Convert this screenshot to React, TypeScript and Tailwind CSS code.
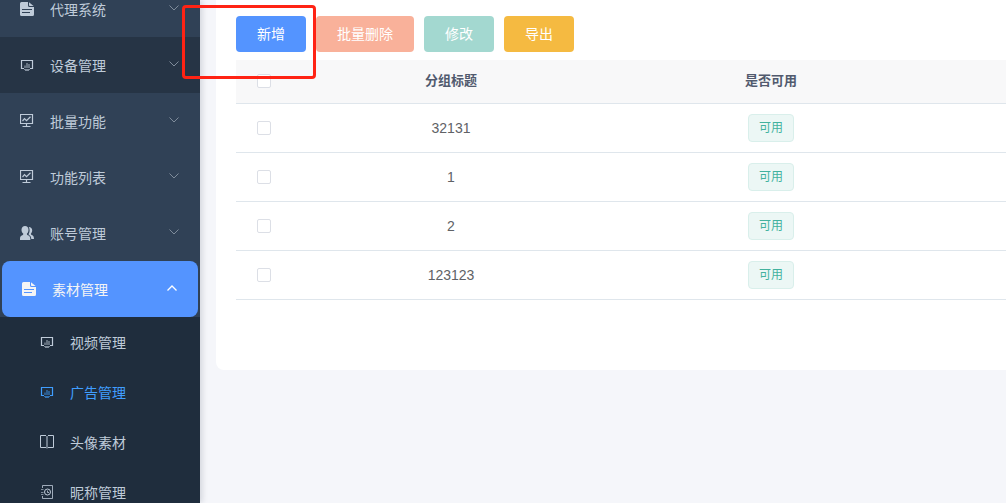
import { useState } from "react";

type IconName = "document" | "monitor" | "board" | "users" | "book" | "contacts";

type MenuItem = {
  label: string;
  icon: IconName;
  hovered?: boolean;
};

type Row = {
  id: number;
  title: string;
  status: string;
};

const menuItems: MenuItem[] = [
  { label: "代理系统", icon: "document" },
  { label: "设备管理", icon: "monitor", hovered: true },
  { label: "批量功能", icon: "board" },
  { label: "功能列表", icon: "board" },
  { label: "账号管理", icon: "users" },
];

const subItems: MenuItem[] = [
  { label: "视频管理", icon: "monitor" },
  { label: "广告管理", icon: "monitor" },
  { label: "头像素材", icon: "book" },
  { label: "昵称管理", icon: "contacts" },
];

const rows: Row[] = [
  { id: 1, title: "32131", status: "可用" },
  { id: 2, title: "1", status: "可用" },
  { id: 3, title: "2", status: "可用" },
  { id: 4, title: "123123", status: "可用" },
];

const actions = [
  { label: "新增", color: "bg-[#5494ff]" },
  { label: "批量删除", color: "bg-[#f9b19a]" },
  { label: "修改", color: "bg-[#a3d8d0]" },
  { label: "导出", color: "bg-[#f5ba41]" },
];

function Icon({ name }: { name: IconName }) {
  return (
    <svg viewBox="0 0 14 14" className="mr-4 h-3.5 w-3.5 shrink-0" fill="none" stroke="currentColor" aria-hidden="true">
      {name === "document" && (
        <path
          stroke="none"
          fill="currentColor"
          fillRule="evenodd"
          d="M1.5 0H8v3.5A1.5 1.5 0 0 0 9.5 5H14v7.5a1.5 1.5 0 0 1-1.5 1.5h-11A1.5 1.5 0 0 1 0 12.5v-11A1.5 1.5 0 0 1 1.5 0ZM9 0.2L13.6 4H9.8A.8.8 0 0 1 9 3.2ZM2 7v1h10V7ZM2 10v1h8v-1Z"
        />
      )}
      {name === "monitor" && (
        <>
          <path d="M4 10.5H1.5v-8h11v8H10" strokeWidth="1.2" />
          <path d="M5 7.5V10M7 5v5M9 6v4" strokeOpacity="0.6" strokeWidth="1.4" />
          <path d="M4 11.5h6M5 12.5h4" strokeOpacity="0.6" />
        </>
      )}
      {name === "board" && (
        <>
          <path d="M.5.5h12v9H.5Z" strokeWidth="1.2" />
          <path d="M2.5 7l2-2.3 2 2 4-3.9" strokeWidth="1.2" />
          <path d="M6.5 10v3M2.5 12.5h8" strokeWidth="1.2" />
        </>
      )}
      {name === "users" && (
        <g stroke="none" fill="currentColor">
          <path d="M5 0C7.2 0 8.5 1.5 8.5 3.8 8.5 5.6 7.8 7 6.9 7.8c0 .8.2 1 1 1.4C9.7 10 10.3 10.7 10.4 14H0c0-3.3.4-3.9 2.3-4.8.8-.4 1-.6 1-1.4C2.3 7 1.5 5.6 1.5 3.8 1.5 1.5 3 0 5 0Z" />
          <path d="M8.7 1c2.2 0 3.5 1.3 3.5 3.3 0 1.5-.6 2.7-1.3 3.4 0 .8.2 1 .9 1.3 1.5.8 2.2 1.4 2.2 4h-2.7c-.2-2.4-1-3.4-2.600-4.300V7.800C9.900 5.800 9.900 3 8.700 1Z" />
        </g>
      )}
      {name === "book" && (
        <>
          <path d="M6 .5H.5v12H6M8 .5h5.500v12H8" />
          <path d="M7 1v12.500" strokeOpacity="0.5" strokeWidth="2" />
        </>
      )}
      {name === "contacts" && (
        <>
          <path d="M2.5 3V.5h10v13h-10V11" strokeOpacity="0.8" />
          <path d="M1 4.5h2.500M1 7.500h2.500M1 9.500h2.500" strokeOpacity="0.6" />
          <circle cx="7.5" cy="7" r="3" />
          <path d="M7.5 5.5v2H9" strokeOpacity="0.8" />
        </>
      )}
    </svg>
  );
}

function Chevron({ open = false }: { open?: boolean }) {
  return (
    <svg
      viewBox="0 0 12 12"
      className={`mb-0.5 ml-auto h-3 w-3 shrink-0 ${open ? "text-white" : "text-[#7f8c9b]"}`}
      fill="none"
      stroke="currentColor"
      strokeWidth={open ? 1.3 : 1}
      aria-hidden="true"
    >
      <path d={open ? "M1.5 8.5L6 4l4.5 4.5" : "M1.5 3.5L6 8l4.5-4.5"} />
    </svg>
  );
}

function Sidebar() {
  const [open, setOpen] = useState(true);

  return (
    <aside className="z-10 w-[200px] shrink-0 overflow-hidden bg-[#304156] text-sm text-[#bfcbd9] shadow-[2px_0_6px_rgba(0,21,41,0.15)]">
      {/* The menu is scrolled a little, so its first entry is cut off */}
      <nav className="-mt-[19px]">
        {menuItems.map((item) => (
          <button
            key={item.label}
            type="button"
            className={`flex h-14 w-full items-center px-5 ${item.hovered ? "bg-[#263445]" : ""}`}
          >
            <Icon name={item.icon} />
            <span className="pt-0.5">{item.label}</span>
            <Chevron />
          </button>
        ))}
        <div className="px-0.5">
          <button
            type="button"
            aria-expanded={open}
            onClick={() => setOpen(!open)}
            className="flex h-14 w-full items-center rounded-lg bg-[#5494ff] px-5 text-[#f4f4f5]"
          >
            <Icon name="document" />
            <span className="pt-0.5">素材管理</span>
            <Chevron open={open} />
          </button>
        </div>
        {open && (
          <div className="bg-[#1f2d3d]">
            {subItems.map((item) => (
              <a
                key={item.label}
                href="#"
                className={`flex h-[50px] items-center pl-10 ${item.label === "广告管理" ? "text-[#409eff]" : ""}`}
              >
                <Icon name={item.icon} />
                <span className="pt-0.5">{item.label}</span>
              </a>
            ))}
          </div>
        )}
      </nav>
    </aside>
  );
}

function Checkbox({ label, checked, onChange }: { label: string; checked: boolean; onChange: () => void }) {
  return (
    <input
      type="checkbox"
      aria-label={label}
      checked={checked}
      onChange={onChange}
      className="mx-auto block h-3.5 w-3.5 appearance-none rounded-xs border border-[#dcdfe6] bg-white checked:border-[#5494ff] checked:bg-[#5494ff]"
    />
  );
}

export default function App() {
  const [selected, setSelected] = useState<number[]>([]);

  const toggle = (id: number) =>
    setSelected((prev) => (prev.includes(id) ? prev.filter((x) => x !== id) : [...prev, id]));

  const toggleAll = () => setSelected(selected.length === rows.length ? [] : rows.map((r) => r.id));

  return (
    <div className="relative flex h-screen overflow-hidden bg-[#f5f6fa] font-['Liberation_Sans','Noto_Sans_CJK_SC',sans-serif]">
      <Sidebar />

      <main className="min-w-0 flex-1 pl-4">
        <section className="rounded-bl-lg bg-white pt-4 pb-[70px] pl-5">
          <div className="flex gap-2.5">
            {actions.map((action) => (
              <button
                key={action.label}
                type="button"
                className={`h-9 rounded-sm px-[21px] text-sm text-white ${action.color}`}
              >
                {action.label}
              </button>
            ))}
          </div>

          <table className="mt-2 w-full table-fixed text-center text-sm text-[#606266]">
            <thead className="bg-[#f8f8f9] text-[13px] text-[#515a6e]">
              <tr className="h-[43px] border-b border-[#dfe6ec]">
                <th className="w-[55px]">
                  <Checkbox label="全选" checked={selected.length === rows.length} onChange={toggleAll} />
                </th>
                <th className="w-80 font-bold">分组标题</th>
                <th className="w-80 font-bold">是否可用</th>
                <th></th>
              </tr>
            </thead>
            <tbody>
              {rows.map((row) => (
                <tr key={row.id} className="h-[49px] border-b border-[#dfe6ec]">
                  <td>
                    <Checkbox label={row.title} checked={selected.includes(row.id)} onChange={() => toggle(row.id)} />
                  </td>
                  <td>{row.title}</td>
                  <td>
                    <span className="mx-auto flex h-7 w-fit items-center rounded-sm border border-[#d9efeb] bg-[#ecf7f5] px-2.5 text-xs text-[#42b29e]">
                      {row.status}
                    </span>
                  </td>
                  <td></td>
                </tr>
              ))}
            </tbody>
          </table>
        </section>
      </main>

      {/* Highlight around the add button */}
      <div className="pointer-events-none absolute top-[5px] left-[182px] z-20 h-[74px] w-[134px] rounded-sm border-3 border-[#ff2314]" />
    </div>
  );
}
